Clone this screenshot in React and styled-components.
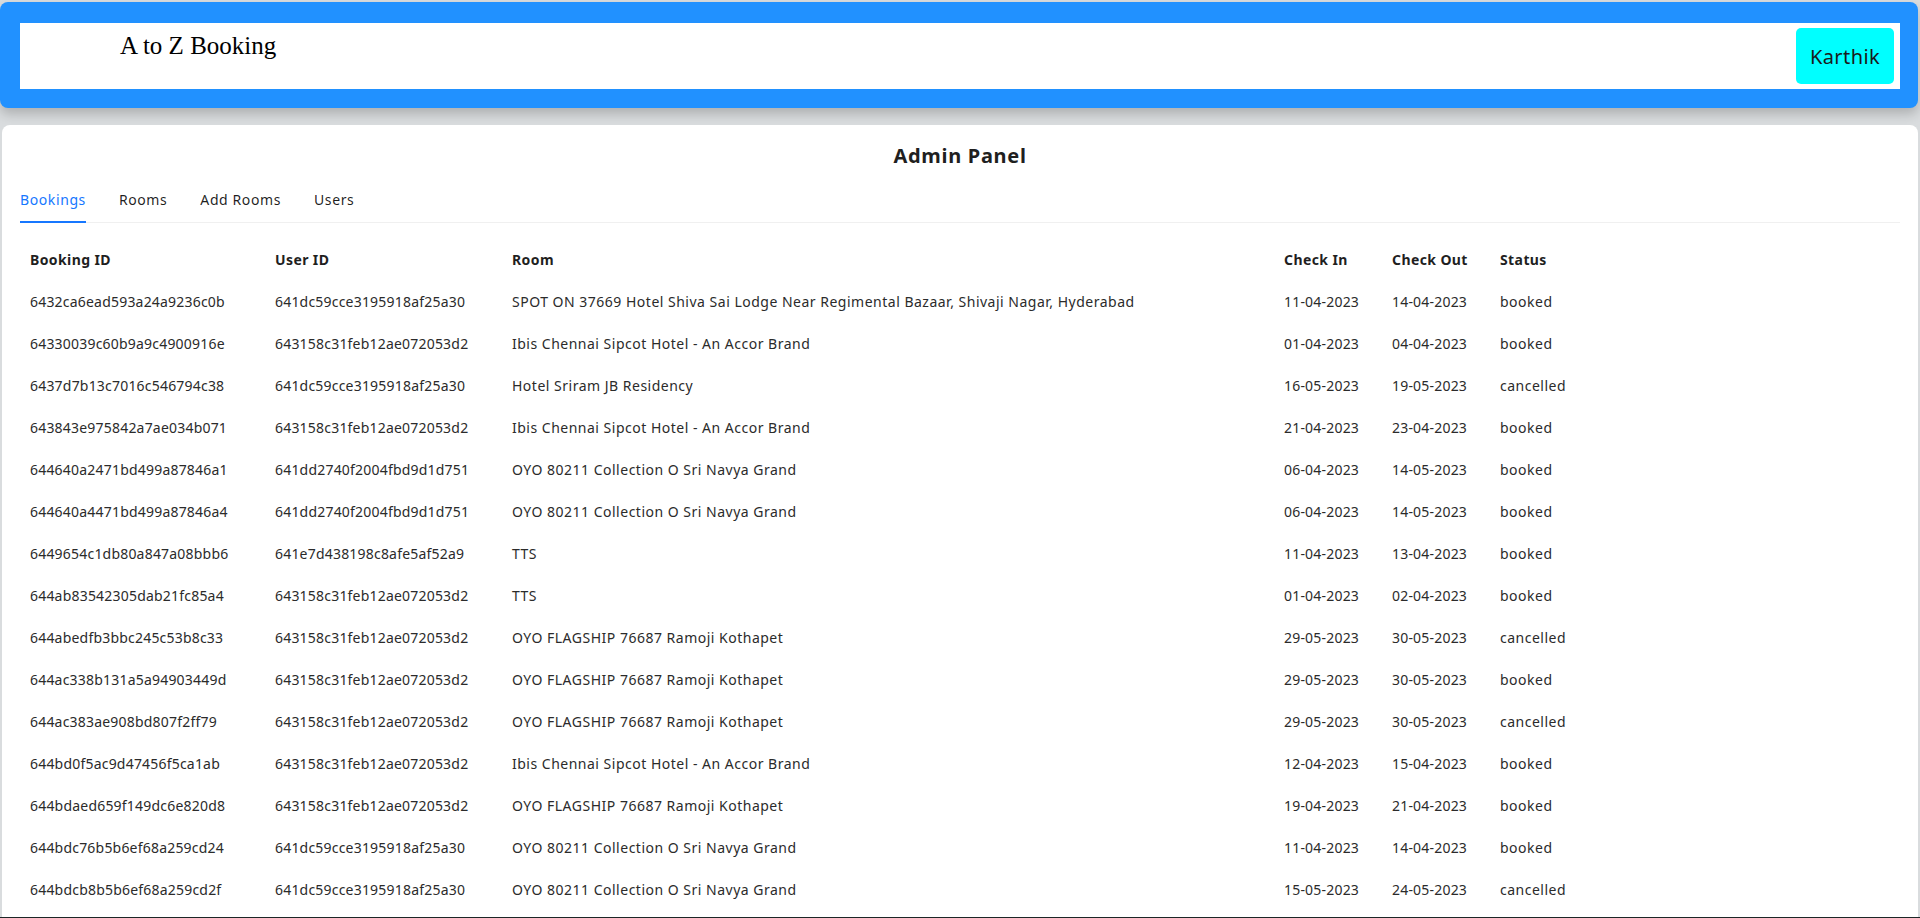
import React from 'react';
import styled, { createGlobalStyle } from "styled-components";

const bookings = [
    ["6432ca6ead593a24a9236c0b", "641dc59cce3195918af25a30", "SPOT ON 37669 Hotel Shiva Sai Lodge Near Regimental Bazaar, Shivaji Nagar, Hyderabad", "11-04-2023", "14-04-2023", "booked"],
    ["64330039c60b9a9c4900916e", "643158c31feb12ae072053d2", "Ibis Chennai Sipcot Hotel - An Accor Brand", "01-04-2023", "04-04-2023", "booked"],
    ["6437d7b13c7016c546794c38", "641dc59cce3195918af25a30", "Hotel Sriram JB Residency", "16-05-2023", "19-05-2023", "cancelled"],
    ["643843e975842a7ae034b071", "643158c31feb12ae072053d2", "Ibis Chennai Sipcot Hotel - An Accor Brand", "21-04-2023", "23-04-2023", "booked"],
    ["644640a2471bd499a87846a1", "641dd2740f2004fbd9d1d751", "OYO 80211 Collection O Sri Navya Grand", "06-04-2023", "14-05-2023", "booked"],
    ["644640a4471bd499a87846a4", "641dd2740f2004fbd9d1d751", "OYO 80211 Collection O Sri Navya Grand", "06-04-2023", "14-05-2023", "booked"],
    ["6449654c1db80a847a08bbb6", "641e7d438198c8afe5af52a9", "TTS", "11-04-2023", "13-04-2023", "booked"],
    ["644ab83542305dab21fc85a4", "643158c31feb12ae072053d2", "TTS", "01-04-2023", "02-04-2023", "booked"],
    ["644abedfb3bbc245c53b8c33", "643158c31feb12ae072053d2", "OYO FLAGSHIP 76687 Ramoji Kothapet", "29-05-2023", "30-05-2023", "cancelled"],
    ["644ac338b131a5a94903449d", "643158c31feb12ae072053d2", "OYO FLAGSHIP 76687 Ramoji Kothapet", "29-05-2023", "30-05-2023", "booked"],
    ["644ac383ae908bd807f2ff79", "643158c31feb12ae072053d2", "OYO FLAGSHIP 76687 Ramoji Kothapet", "29-05-2023", "30-05-2023", "cancelled"],
    ["644bd0f5ac9d47456f5ca1ab", "643158c31feb12ae072053d2", "Ibis Chennai Sipcot Hotel - An Accor Brand", "12-04-2023", "15-04-2023", "booked"],
    ["644bdaed659f149dc6e820d8", "643158c31feb12ae072053d2", "OYO FLAGSHIP 76687 Ramoji Kothapet", "19-04-2023", "21-04-2023", "booked"],
    ["644bdc76b5b6ef68a259cd24", "641dc59cce3195918af25a30", "OYO 80211 Collection O Sri Navya Grand", "11-04-2023", "14-04-2023", "booked"],
    ["644bdcb8b5b6ef68a259cd2f", "641dc59cce3195918af25a30", "OYO 80211 Collection O Sri Navya Grand", "15-05-2023", "24-05-2023", "cancelled"],
];

// numeric columns (ids, dates) render a bit tighter than the text ones
const columns = [
    { title: "Booking ID", width: 245, numeric: true },
    { title: "User ID", width: 237, numeric: true },
    { title: "Room", width: 772 },
    { title: "Check In", width: 108, numeric: true },
    { title: "Check Out", width: 108, numeric: true },
    { title: "Status", width: 110 },
];

const tabs = ["Bookings", "Rooms", "Add Rooms", "Users"];

function App() {
    return (
        <>
            <GlobalStyle />
            <Page>
                <NavBar>
                    <NavInner>
                        <Brand>A to Z Booking</Brand>
                        <UserButton>Karthik</UserButton>
                    </NavInner>
                </NavBar>
                <Panel>
                    <PanelTitle>Admin Panel</PanelTitle>
                    <TabList>
                        {tabs.map((tab, index) => (
                            <Tab key={tab} $active={index === 0}>{tab}</Tab>
                        ))}
                    </TabList>
                    <Table>
                        <colgroup>
                            {columns.map((col) => (
                                <col key={col.title} style={{ width: col.width }} />
                            ))}
                        </colgroup>
                        <thead>
                            <tr>
                                {columns.map((col) => (
                                    <HeadCell key={col.title}>{col.title}</HeadCell>
                                ))}
                            </tr>
                        </thead>
                        <tbody>
                            {bookings.map((row) => (
                                <tr key={row[0]}>
                                    {row.map((value, i) => (
                                        <Cell key={i} $numeric={columns[i].numeric}>{value}</Cell>
                                    ))}
                                </tr>
                            ))}
                        </tbody>
                    </Table>
                </Panel>
            </Page>
        </>
    );
}

const GlobalStyle = createGlobalStyle`
    html, body {
        margin: 0;
        padding: 0;
        background: #d9dcde;
    }
    * {
        box-sizing: border-box;
    }
`;

const Page = styled.div`
    height: 100vh;
    overflow: hidden;
    display: flex;
    flex-direction: column;
    padding-top: 2px;
    border-bottom: 1px solid #1d2626;
`;

const NavBar = styled.div`
    margin-right: 2px;
    background-color: #2191ff;
    border-radius: 8px;
    padding: 21px 18px 19px 20px;
    box-shadow: 0 6px 12px rgba(0, 0, 0, 0.2);
    position: relative;
    z-index: 1;
`;

const NavInner = styled.div`
    height: 66px;
    background-color: #fff;
    display: flex;
    justify-content: space-between;
    align-items: flex-start;
    padding: 5px 6px 0 100px;
`;

const Brand = styled.div`
    font-family: "Liberation Serif", "Times New Roman", serif;
    font-size: 25px;
    color: #000;
    margin-top: 4px;
`;

const UserButton = styled.button`
    width: 98px;
    height: 56px;
    border: none;
    border-radius: 5px;
    background-color: #00ffff;
    color: #1a1a1a;
    font-family: "Noto Sans", sans-serif;
    font-size: 20px;
    letter-spacing: 0.4px;
    padding: 0;
`;

const Panel = styled.div`
    flex: 1;
    margin: 17px 2px 0 2px;
    background-color: #fff;
    border-radius: 8px 8px 0 0;
    padding: 0 18px;
    font-family: "Noto Sans", sans-serif;
    color: rgba(0, 0, 0, 0.88);
`;

const PanelTitle = styled.div`
    text-align: center;
    font-size: 20px;
    font-weight: 700;
    letter-spacing: 0.7px;
    color: #1f1f1f;
    padding-top: 17px;
    height: 52px;
    line-height: 28px;
`;

const TabList = styled.div`
    display: flex;
    gap: 33px;
    border-bottom: 1px solid #f0f0f0;
    margin-bottom: 16px;
`;

const Tab = styled.div`
    padding: 12px 0 10px;
    font-size: 14px;
    line-height: 22px;
    letter-spacing: 0.6px;
    color: ${(props) => (props.$active ? "#1677ff" : "rgba(0, 0, 0, 0.88)")};
    border-bottom: 2px solid ${(props) => (props.$active ? "#1677ff" : "transparent")};
    margin-bottom: -1px;
`;

const Table = styled.table`
    border-collapse: collapse;
    table-layout: fixed;
    font-size: 14px;
`;

const HeadCell = styled.th`
    text-align: left;
    font-weight: 700;
    color: #1f1f1f;
    padding: 10px 10px;
    line-height: 22px;
    letter-spacing: 0.4px;
    white-space: nowrap;
`;

const Cell = styled.td`
    padding: 10px 10px;
    line-height: 22px;
    letter-spacing: ${(props) => (props.$numeric ? "0.2px" : "0.5px")};
    white-space: nowrap;
    color: #2b2b2b;
`;

export default App;
